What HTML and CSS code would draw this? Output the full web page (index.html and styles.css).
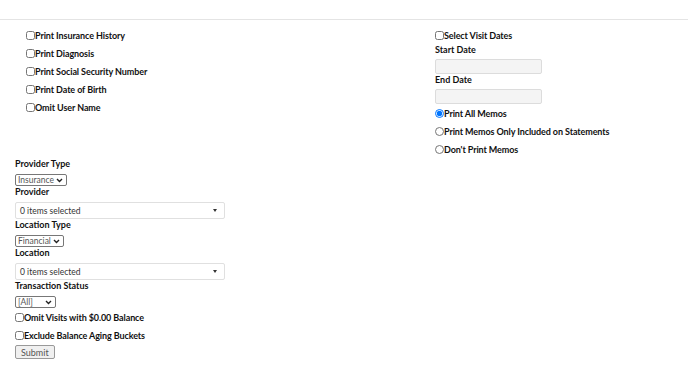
FILE: index.html
```html
<!DOCTYPE html>
<html lang="en">
<head>
    <meta charset="UTF-8">
    <title>Statement Report</title>
    <link rel="stylesheet" href="styles.css">
</head>
<body>
    <div class="topbar"></div>

    <div class="options">
        <div class="col">
            <label class="check"><input type="checkbox">Print Insurance History</label>
            <label class="check"><input type="checkbox">Print Diagnosis</label>
            <label class="check"><input type="checkbox">Print Social Security Number</label>
            <label class="check"><input type="checkbox">Print Date of Birth</label>
            <label class="check"><input type="checkbox">Omit User Name</label>
        </div>
        <div class="col">
            <label class="check"><input type="checkbox">Select Visit Dates</label>
            <div class="field-label">Start Date</div>
            <input type="text" class="date-input" disabled>
            <div class="field-label">End Date</div>
            <input type="text" class="date-input" disabled>
            <label class="check"><input type="radio" name="memos" checked>Print All Memos</label>
            <label class="check"><input type="radio" name="memos">Print Memos Only Included on Statements</label>
            <label class="check"><input type="radio" name="memos">Don't Print Memos</label>
        </div>
    </div>

    <form class="filters">
        <div class="field-label">Provider Type</div>
        <div class="select-wrap w-insurance">
            <select class="small-select">
                <option>Insurance</option>
                <option>Provider</option>
            </select>
            <svg class="chev" width="7" height="5" viewBox="0 0 7 5"><path d="M1 1l2.5 2.5L6 1" fill="none" stroke="#222" stroke-width="1.4"/></svg>
        </div>

        <div class="field-label">Provider</div>
        <div class="multi">
            <span>0 items selected</span>
            <span class="caret"></span>
        </div>

        <div class="field-label">Location Type</div>
        <div class="select-wrap w-financial">
            <select class="small-select">
                <option>Financial</option>
                <option>Service</option>
            </select>
            <svg class="chev" width="7" height="5" viewBox="0 0 7 5"><path d="M1 1l2.5 2.5L6 1" fill="none" stroke="#222" stroke-width="1.4"/></svg>
        </div>

        <div class="field-label">Location</div>
        <div class="multi">
            <span>0 items selected</span>
            <span class="caret"></span>
        </div>

        <div class="field-label">Transaction Status</div>
        <div class="select-wrap w-all">
            <select class="small-select">
                <option>[All]</option>
                <option>Open</option>
                <option>Closed</option>
            </select>
            <svg class="chev" width="7" height="5" viewBox="0 0 7 5"><path d="M1 1l2.5 2.5L6 1" fill="none" stroke="#222" stroke-width="1.4"/></svg>
        </div>

        <label class="check"><input type="checkbox">Omit Visits with $0.00 Balance</label>
        <label class="check"><input type="checkbox">Exclude Balance Aging Buckets</label>

        <button type="button" class="submit">Submit</button>
    </form>
</body>
</html>
```

FILE: styles.css
```css
body {
    margin: 0;
    font-family: Lato, "Open Sans", sans-serif;
    font-size: 9px;
    color: #111;
    background: white;
}
.topbar {
    height: 19px;
    border-bottom: 1px solid #e4e4e4;
}
.options {
    display: grid;
    grid-template-columns: 409px 1fr;
    padding: 6px 0 0 26px;
}
.check {
    display: flex;
    align-items: center;
    height: 18px;
    font-weight: bold;
    letter-spacing: -0.1px;
}
.check input {
    width: 9px;
    height: 9px;
    margin: 0;
}
.field-label {
    font-weight: bold;
    line-height: 12px;
    margin-bottom: 4px;
}
.col .field-label {
    line-height: 11px;
}
.date-input {
    display: block;
    box-sizing: border-box;
    width: 107px;
    height: 15px;
    margin: 0;
    border: 1px solid #dcdcdc;
    border-radius: 2px;
    background: #f4f4f4;
}
.filters {
    padding: 0 0 0 15px;
}
.select-wrap {
    position: relative;
    height: 12px;
}
.small-select {
    appearance: none;
    box-sizing: border-box;
    display: block;
    width: 100%;
    height: 12px;
    margin: 0;
    padding: 0 0 0 2px;
    font-family: Lato, sans-serif;
    font-size: 8.5px;
    line-height: 10px;
    color: #555;
    border: 1px solid #777;
    border-radius: 2px;
    background: white;
}
.chev {
    position: absolute;
    right: 4px;
    top: 4px;
    pointer-events: none;
}
.w-insurance { width: 52px; }
.w-financial { width: 49px; }
.w-all { width: 41px; }
.multi {
    box-sizing: border-box;
    width: 210px;
    height: 17px;
    display: flex;
    align-items: center;
    justify-content: space-between;
    padding: 0 7px 0 4px;
    border: 1px solid #e0e0e0;
    border-radius: 2px;
    font-size: 8.5px;
    color: #333;
}
.caret {
    width: 0;
    height: 0;
    border-left: 2.5px solid transparent;
    border-right: 2.5px solid transparent;
    border-top: 3px solid #333;
}
.submit {
    display: block;
    margin-top: 1px;
    height: 14px;
    padding: 0 5px;
    font-family: Lato, sans-serif;
    font-size: 9px;
    color: #555;
    background: #f0f0f0;
    border: 1px solid #999;
    border-radius: 2px;
}
```
